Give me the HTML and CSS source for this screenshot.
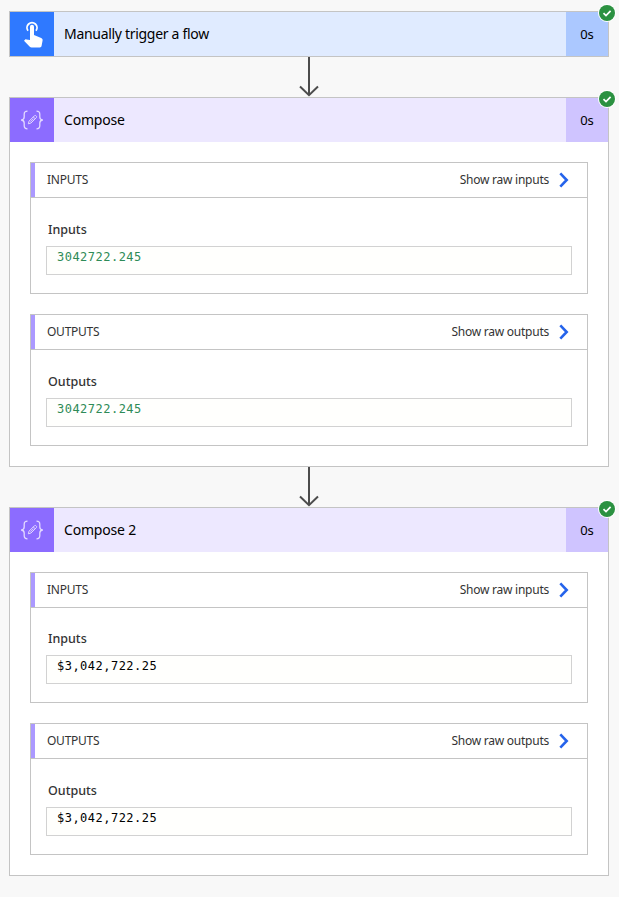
FILE: index.html
```html
<!DOCTYPE html>
<html lang="en">
<head>
<meta charset="utf-8">
<title>Flow run</title>
<link rel="stylesheet" href="styles.css">
</head>
<body>
<svg class="defs" width="0" height="0">
  <symbol id="check" viewBox="0 0 18 18"><circle cx="9" cy="9" r="9" fill="#fff"/><circle cx="9" cy="9" r="8" fill="#2b9141"/><path d="M5.5 9.2 8 11.6l4.6-4.7" fill="none" stroke="#fff" stroke-width="1.7"/></symbol>
  <symbol id="touch" viewBox="0 0 44 44"><path d="M18 18.7a5 5 0 1 1 8 0" fill="none" stroke="#fff" stroke-width="1.8"/><path d="M20 14.8a2 2 0 0 1 4 0V23l7.2 3.1c1 .5 1.6 1.2 1.4 2.3l-1 5.4c-.2 1-.8 1.7-1.800 1.700H21.500c-.7 0-1.200-.2-1.700-.7L14 28.800l1-1c.4-.4.8-.5 1.400-.4L20 28z" fill="#fff"/></symbol>
  <symbol id="compose" viewBox="0 0 44 44"><g fill="none" stroke="#e3d9ff" stroke-width="1.3"><path d="M17.500 13.200c-2.500 0-3.300.8-3.300 3v2.800c0 2-.8 2.800-3 3 2.200.2 3 1 3 3v2.800c0 2.200.8 3 3.300 3M26.500 13.200c2.500 0 3.300.8 3.300 3v2.800c0 2 .8 2.800 3 3-2.200.2-3 1-3 3v2.800c0 2.200-.8 3-3.300 3"/><path d="m18.300 25.800.8-2.700 5.400-5.400c1-1 2.900.9 1.900 1.900L21 25zM23.300 18.900l1.900 1.900M20.500 23.700l3-3" stroke-width="1"/></g></symbol>
  <symbol id="arrow" viewBox="0 0 22 40"><path d="M11 0v38M2 29.500l9 8.700 9-8.700" fill="none" stroke="#4c4c4c" stroke-width="2"/></symbol>
  <symbol id="chevron" viewBox="0 0 10 16"><path d="m1.300 1.300 6.400 6.700-6.400 6.700" fill="none" stroke="#2563eb" stroke-width="2.600"/></symbol>
</svg>
<main class="flow">
  <article class="card trigger">
    <header class="card-header"><svg class="icon"><use href="#touch"/></svg><h2 class="name name-trigger">Manually trigger a flow</h2><span class="duration">0s</span></header>
    <svg class="status"><use href="#check"/></svg>
  </article>
  <svg class="arrow"><use href="#arrow"/></svg>
  <article class="card compose">
    <header class="card-header"><svg class="icon"><use href="#compose"/></svg><h2 class="name">Compose</h2><span class="duration">0s</span></header>
    <svg class="status"><use href="#check"/></svg>
    <div class="sections">
      <section class="panel">
        <div class="panel-header"><h3 class="panel-title">INPUTS</h3><a class="raw"><span>Show raw inputs</span><svg class="chevron"><use href="#chevron"/></svg></a></div>
        <div class="panel-body"><div class="label">Inputs</div><div class="value number">3042722.245</div></div>
      </section>
      <section class="panel">
        <div class="panel-header"><h3 class="panel-title">OUTPUTS</h3><a class="raw"><span>Show raw outputs</span><svg class="chevron"><use href="#chevron"/></svg></a></div>
        <div class="panel-body"><div class="label">Outputs</div><div class="value number">3042722.245</div></div>
      </section>
    </div>
  </article>
  <svg class="arrow"><use href="#arrow"/></svg>
  <article class="card compose">
    <header class="card-header"><svg class="icon"><use href="#compose"/></svg><h2 class="name">Compose 2</h2><span class="duration">0s</span></header>
    <svg class="status"><use href="#check"/></svg>
    <div class="sections">
      <section class="panel compact">
        <div class="panel-header"><h3 class="panel-title">INPUTS</h3><a class="raw"><span>Show raw inputs</span><svg class="chevron"><use href="#chevron"/></svg></a></div>
        <div class="panel-body"><div class="label">Inputs</div><div class="value">$3,042,722.25</div></div>
      </section>
      <section class="panel">
        <div class="panel-header"><h3 class="panel-title">OUTPUTS</h3><a class="raw"><span>Show raw outputs</span><svg class="chevron"><use href="#chevron"/></svg></a></div>
        <div class="panel-body"><div class="label">Outputs</div><div class="value">$3,042,722.25</div></div>
      </section>
    </div>
  </article>
</main>
</body>
</html>
```
FILE: styles.css
```css
* { box-sizing: border-box; }
body { margin: 0; background: #f8f8f8; color: #000; font-family: "Noto Sans", "Open Sans", sans-serif; }
.defs { position: absolute; }
.flow { display: flex; flex-direction: column; width: 600px; margin: 11px 0 0 9px; }
.card { position: relative; border: 1px solid #c4c4c4; background: #fff; }
.card-header { display: flex; height: 44px; align-items: center; line-height: 44px; }
.icon { width: 44px; height: 44px; flex: none; }
.name { flex: 1; margin: 0; padding-left: 10px; font-size: 14px; font-weight: 400; letter-spacing: -0.2px; }
.name-trigger { letter-spacing: -0.3px; }
.duration { width: 42px; text-align: center; font-size: 13px; }
.trigger .icon { background: #2f79ff; }
.trigger .card-header { background: #e0ebff; }
.trigger .duration { background: #abc8ff; }
.compose .icon { background: #8c6cff; }
.compose .card-header { background: #ede8ff; }
.compose .duration { background: #cfc4ff; }
.status { position: absolute; top: -8px; right: -8px; width: 18px; height: 18px; }
.arrow { width: 22px; height: 40px; margin-left: 289px; }
.sections { display: flex; flex-direction: column; gap: 20px; padding: 20px; }
.panel { height: 132px; border: 1px solid #c4c4c4; }
.panel-header { display: flex; height: 35px; align-items: center; justify-content: space-between; padding: 0 18px 0 12px; border-bottom: 1px solid #c4c4c4; box-shadow: inset 4px 0 #ab99ff; line-height: 34px; color: #333; }
.panel-header { padding-left: 16px; }
.panel-title { margin: 0; font-size: 12px; font-weight: 400; letter-spacing: -0.25px; }
.raw { display: flex; align-items: center; gap: 10px; font-size: 12px; letter-spacing: -0.25px; }
.chevron { width: 10px; height: 16px; }
.panel-body { padding: 22px 15px 0; }
.label { height: 26px; padding-left: 2px; font-size: 12.5px; font-weight: 500; line-height: 20px; color: #333; }
.value { height: 29px; padding-left: 10px; border: 1px solid #d2d2d2; background: #fffffd; font-family: "DejaVu Sans Mono", monospace; font-size: 12px; line-height: 20px; letter-spacing: 0.48px; }
.number { color: #2e8b57; }
.compact { height: 131px; }
.compact .panel-body { padding-top: 21px; }
```
